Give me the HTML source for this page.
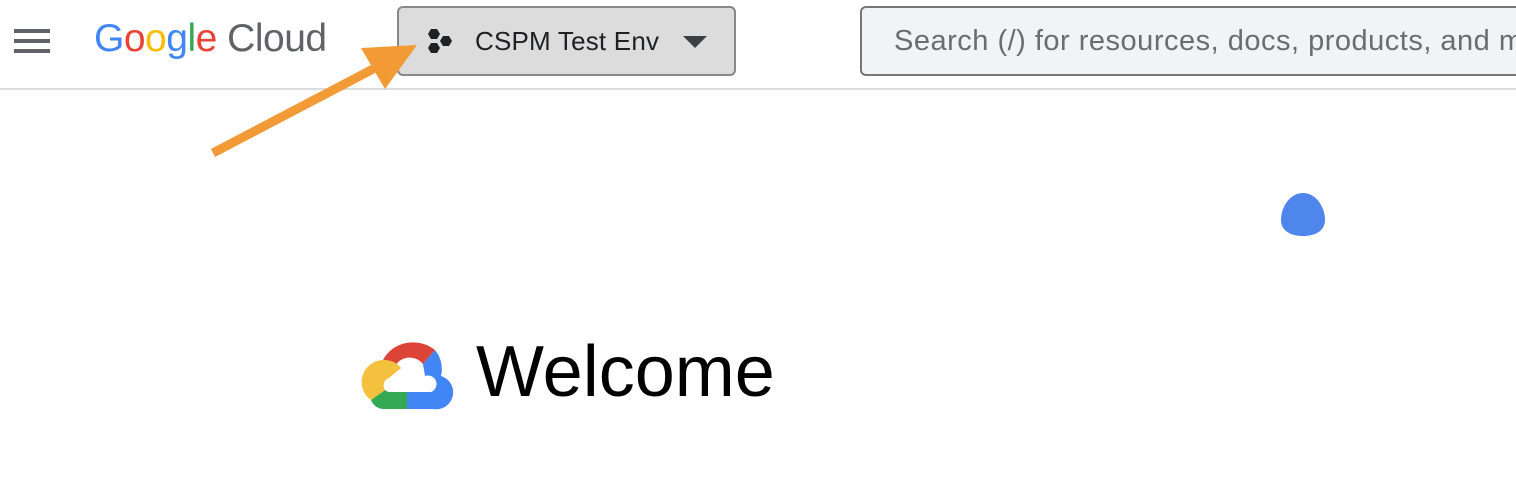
<!DOCTYPE html>
<html><head><style>
body{margin:0;width:1516px;height:478px;background:#fff;position:relative;overflow:hidden;font-family:"Liberation Sans",Arial,sans-serif}
.hdr{position:absolute;left:0;top:0;width:1516px;height:88px;border-bottom:2px solid #dadce0}
.ham{position:absolute;left:14px;width:36px;height:4px;background:#5f6368}
.logo{position:absolute;left:94px;top:17px;font-size:39px;letter-spacing:-0.5px}
.btn{position:absolute;left:397px;top:6px;width:339px;height:70px;background:#dcdcdc;border:2px solid #888;border-radius:6px;box-sizing:border-box}
.btn span{position:absolute;left:76px;top:18px;font-size:26px;color:#202124;letter-spacing:0.2px}
.search{position:absolute;left:860px;top:6px;width:700px;height:70px;background:#f1f3f4;border:2px solid #777;border-radius:6px;box-sizing:border-box}
.search span{position:absolute;left:32px;top:17px;font-size:29px;color:#6a6d70;white-space:nowrap;letter-spacing:0.5px}
.welcome{position:absolute;left:476px;top:331px;font-size:72px;color:#000}
</style></head><body>
<div class="hdr">
<div class="ham" style="top:29px"></div><div class="ham" style="top:39px"></div><div class="ham" style="top:49px"></div>
<div class="logo"><span style="color:#4285f4">G</span><span style="color:#ea4335">o</span><span style="color:#fbbc05">o</span><span style="color:#4285f4">g</span><span style="color:#34a853">l</span><span style="color:#ea4335">e</span> <span style="color:#5f6368">Cloud</span></div>
<div class="btn">
<svg style="position:absolute;left:26px;top:18px" width="32" height="34" viewBox="0 0 32 34"><g fill="#202124"><polygon points="6,3 12,3 15,8 12,13 6,13 3,8"/><polygon points="18,10 24,10 27,15 24,20 18,20 15,15"/><polygon points="6,17 12,17 15,22 12,27 6,27 3,22"/></g></svg>
<span>CSPM Test Env</span>
<svg style="position:absolute;left:284px;top:28px" width="26" height="14"><polygon points="0,0 24,0 12,12" fill="#3c4043"/></svg>
</div>
<div class="search"><span>Search (/) for resources, docs, products, and more</span></div>
</div>
<svg style="position:absolute;left:0;top:0" width="1516" height="478">
<line x1="213" y1="153" x2="375" y2="68" stroke="#f29a36" stroke-width="9"/>
<polygon points="417,45 361,48 385,89" fill="#f29a36"/>
<path d="M1303,193 C1316,193 1325,207 1325,220 C1325,231 1315,236 1303,236 C1291,236 1281,231 1281,220 C1281,207 1290,193 1303,193 Z" fill="#4f86ec"/>
<g transform="translate(363,338)">
<path d="M20,22 A33,30 0 0 1 72,12 L60,26 A17,17 0 0 0 32,28 Z" fill="#db4437"/>
<path d="M72,12 A30,30 0 0 1 78,38 A17,17 0 0 1 70,71 L44,71 L44,54 L68,54 A8,8 0 0 0 62,38 L60,26 Z" fill="#4285f4"/>
<path d="M44,54 L44,71 L20,71 A14,14 0 0 1 8,62 L22,52 A8,8 0 0 0 27,54 Z" fill="#34a853"/>
<path d="M8,62 A22,22 0 0 1 20,22 A21,21 0 0 1 38,30 L26,40 A8,8 0 0 0 22,52 Z" fill="#f4c13e"/>
</g>
</svg>
<div class="welcome">Welcome</div>
</body></html>
